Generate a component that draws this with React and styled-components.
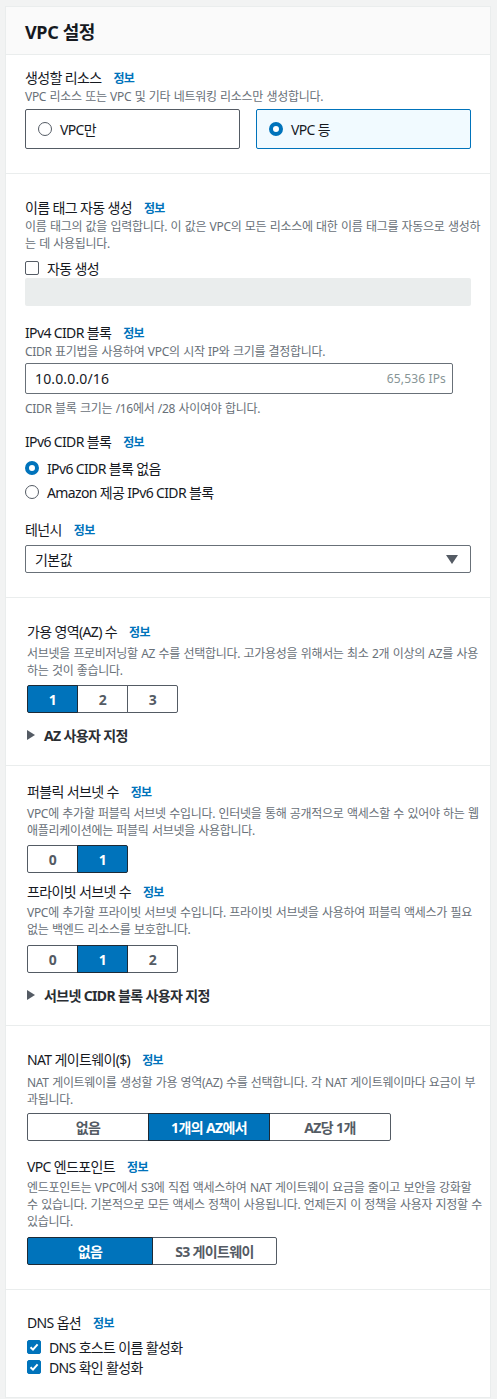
import React from "react"
import styled, { createGlobalStyle } from "styled-components"

const GlobalStyle = createGlobalStyle`
  body {
    margin: 0;
    background: #f2f3f3;
    font-family: "Noto Sans", "Noto Sans CJK KR", sans-serif;
    font-feature-settings: "palt";
    letter-spacing: -0.04em;
    color: #16191f;
  }
`

const Page = styled.div`
  padding: 6px 6px 1px 5px;
`

const Card = styled.div`
  background: #fff;
  border: 1px solid #eaeded;
`

const Header = styled.div`
  height: 47px;
  padding: 0 19px;
  display: flex;
  align-items: center;
  background: #fafafa;
  border-bottom: 1px solid #eaeded;
`

const Title = styled.h2`
  margin: 0;
  font-size: 18px;
  font-weight: 700;
  letter-spacing: -0.02em;
`

const Section = styled.div`
  padding: ${({ $top }) => $top}px 19px ${({ $bottom }) => $bottom}px
    ${({ $indent }) => $indent || 19}px;
  & + & {
    border-top: 1px solid #eaeded;
  }
`

const Label = styled.div`
  height: 20px;
  line-height: 20px;
  font-size: 14px;
  white-space: nowrap;
  margin-top: ${({ $mt }) => $mt || 0}px;
`

const Info = styled.span`
  margin-left: 12px;
  font-size: 12px;
  font-weight: 700;
  color: #0073bb;
`

const Desc = styled.div`
  font-size: 12px;
  color: #687078;
  letter-spacing: -0.025em;
  word-spacing: 0.05em;
  margin-top: ${({ $mt }) => $mt || 0}px;
`

const DescLine = styled.div`
  height: 17px;
  line-height: 17px;
  white-space: nowrap;
`

const Tiles = styled.div`
  display: grid;
  grid-template-columns: 1fr 1fr;
  gap: 16px;
  margin-top: 4px;
`

const Tile = styled.div`
  height: 40px;
  box-sizing: border-box;
  display: flex;
  align-items: center;
  gap: 8px;
  padding-left: 12px;
  font-size: 14px;
  border: 1px solid ${({ $on }) => ($on ? "#0073bb" : "#545b64")};
  background: ${({ $on }) => ($on ? "#f1faff" : "#fff")};
  border-radius: 2px;
`

const Radio = styled.span`
  width: 14px;
  height: 14px;
  box-sizing: border-box;
  border-radius: 50%;
  flex-shrink: 0;
  border: ${({ $on }) => ($on ? "4px solid #0073bb" : "1px solid #545b64")};
  background: #fff;
`

const OptionRow = styled.div`
  display: flex;
  align-items: center;
  gap: 8px;
  height: 20px;
  font-size: 14px;
  white-space: nowrap;
  margin-top: ${({ $mt }) => $mt || 0}px;
`

const Check = styled.span`
  width: 14px;
  height: 14px;
  box-sizing: border-box;
  border-radius: 2px;
  flex-shrink: 0;
  display: flex;
  align-items: center;
  justify-content: center;
  border: 1px solid ${({ $on }) => ($on ? "#0073bb" : "#545b64")};
  background: ${({ $on }) => ($on ? "#0073bb" : "#fff")};
`

const Disabled = styled.div`
  height: 28px;
  background: #eaeded;
  border-radius: 2px;
`

const Input = styled.div`
  height: 31px;
  box-sizing: border-box;
  width: ${({ $w }) => $w || "100%"};
  margin-top: ${({ $mt }) => $mt || 0}px;
  border: 1px solid #687078;
  border-radius: 2px;
  display: flex;
  align-items: center;
  justify-content: space-between;
  padding: 0 6px 0 9px;
  font-size: 14px;
  letter-spacing: 0.01em;
`

const Suffix = styled.span`
  font-size: 12px;
  color: #879596;
`

const Select = styled(Input)`
  height: 28px;
  padding-right: 12px;
  letter-spacing: -0.04em;
`

const Caret = styled.span`
  width: 0;
  height: 0;
  border-left: 6px solid transparent;
  border-right: 6px solid transparent;
  border-top: 9px solid #545b64;
`

const Segments = styled.div`
  display: flex;
  margin-top: ${({ $mt }) => $mt || 0}px;
`

const Segment = styled.div`
  width: ${({ $w }) => $w}px;
  height: 28px;
  box-sizing: border-box;
  display: flex;
  align-items: center;
  justify-content: center;
  font-size: 14px;
  font-weight: 700;
  color: ${({ $on }) => ($on ? "#fff" : "#545b64")};
  background: ${({ $on }) => ($on ? "#0073bb" : "#fff")};
  border: 1px solid ${({ $on }) => ($on ? "#1d2a36" : "#545b64")};
  position: relative;
  z-index: ${({ $on }) => ($on ? 1 : 0)};
  & + & {
    margin-left: -1px;
  }
  &:first-child {
    border-radius: 2px 0 0 2px;
  }
  &:last-child {
    border-radius: 0 2px 2px 0;
  }
`

const Expander = styled.div`
  display: flex;
  align-items: center;
  gap: 9px;
  height: 20px;
  margin-top: 12px;
  font-size: 14px;
  font-weight: 700;
  color: #2a2e33;
`

const Arrow = styled.span`
  width: 0;
  height: 0;
  border-top: 5px solid transparent;
  border-bottom: 5px solid transparent;
  border-left: 8px solid #545b64;
`

const Tick = () => (
  <svg width="10" height="10" viewBox="0 0 10 10">
    <path d="M1.5 5.2 L4 7.6 L8.6 2.4" fill="none" stroke="#fff" strokeWidth="2" />
  </svg>
)

const SegGroup = ({ items, active, w, mt }) => (
  <Segments $mt={mt}>
    {items.map((it, i) => (
      <Segment key={it} $w={Array.isArray(w) ? w[i] : w} $on={i === active}>
        {it}
      </Segment>
    ))}
  </Segments>
)

const FieldLabel = ({ children, mt }) => (
  <Label $mt={mt}>
    {children}
    <Info>정보</Info>
  </Label>
)

const Description = ({ lines, mt }) => (
  <Desc $mt={mt}>
    {lines.map((l) => (
      <DescLine key={l}>{l}</DescLine>
    ))}
  </Desc>
)

export default function App() {
  return (
    <Page>
      <GlobalStyle />
      <Card>
        <Header>
          <Title>VPC 설정</Title>
        </Header>

        <Section $top={13} $bottom={24}>
          <FieldLabel>생성할 리소스</FieldLabel>
          <Description lines={["VPC 리소스 또는 VPC 및 기타 네트워킹 리소스만 생성합니다."]} />
          <Tiles>
            <Tile>
              <Radio />
              VPC만
            </Tile>
            <Tile $on>
              <Radio $on />
              VPC 등
            </Tile>
          </Tiles>
        </Section>

        <Section $top={24} $bottom={24}>
          <FieldLabel>이름 태그 자동 생성</FieldLabel>
          <Description
            lines={[
              "이름 태그의 값을 입력합니다. 이 값은 VPC의 모든 리소스에 대한 이름 태그를 자동으로 생성하",
              "는 데 사용됩니다.",
            ]}
          />
          <OptionRow $mt={6}>
            <Check />
            자동 생성
          </OptionRow>
          <Disabled />

          <FieldLabel mt={17}>IPv4 CIDR 블록</FieldLabel>
          <Description lines={["CIDR 표기법을 사용하여 VPC의 시작 IP와 크기를 결정합니다."]} />
          <Input $mt={3} $w="428px">
            10.0.0.0/16
            <Suffix>65,536 IPs</Suffix>
          </Input>
          <Description mt={6} lines={["CIDR 블록 크기는 /16에서 /28 사이여야 합니다."]} />

          <FieldLabel mt={15}>IPv6 CIDR 블록</FieldLabel>
          <OptionRow $mt={6}>
            <Radio $on />
            IPv6 CIDR 블록 없음
          </OptionRow>
          <OptionRow $mt={4}>
            <Radio />
            Amazon 제공 IPv6 CIDR 블록
          </OptionRow>

          <FieldLabel mt={18}>테넌시</FieldLabel>
          <Select $mt={5}>
            기본값
            <Caret />
          </Select>
        </Section>

        <Section $top={24} $bottom={20} $indent={21}>
          <FieldLabel>가용 영역(AZ) 수</FieldLabel>
          <Description
            mt={3}
            lines={[
              "서브넷을 프로비저닝할 AZ 수를 선택합니다. 고가용성을 위해서는 최소 2개 이상의 AZ를 사용",
              "하는 것이 좋습니다.",
            ]}
          />
          <SegGroup items={["1", "2", "3"]} active={0} w={51} mt={6} />
          <Expander>
            <Arrow />
            AZ 사용자 지정
          </Expander>
        </Section>

        <Section $top={16} $bottom={20} $indent={21}>
          <FieldLabel>퍼블릭 서브넷 수</FieldLabel>
          <Description
            mt={3}
            lines={[
              "VPC에 추가할 퍼블릭 서브넷 수입니다. 인터넷을 통해 공개적으로 액세스할 수 있어야 하는 웹",
              "애플리케이션에는 퍼블릭 서브넷을 사용합니다.",
            ]}
          />
          <SegGroup items={["0", "1"]} active={1} w={51} mt={6} />

          <FieldLabel mt={9}>프라이빗 서브넷 수</FieldLabel>
          <Description
            mt={2}
            lines={[
              "VPC에 추가할 프라이빗 서브넷 수입니다. 프라이빗 서브넷을 사용하여 퍼블릭 액세스가 필요",
              "없는 백엔드 리소스를 보호합니다.",
            ]}
          />
          <SegGroup items={["0", "1", "2"]} active={1} w={51} mt={7} />
          <Expander>
            <Arrow />
            서브넷 CIDR 블록 사용자 지정
          </Expander>
        </Section>

        <Section $top={24} $bottom={24} $indent={21}>
          <FieldLabel>NAT 게이트웨이($)</FieldLabel>
          <Description
            mt={4}
            lines={[
              "NAT 게이트웨이를 생성할 가용 영역(AZ) 수를 선택합니다. 각 NAT 게이트웨이마다 요금이 부",
              "과됩니다.",
            ]}
          />
          <SegGroup items={["없음", "1개의 AZ에서", "AZ당 1개"]} active={1} w={122} mt={5} />

          <FieldLabel mt={16}>VPC 엔드포인트</FieldLabel>
          <Description
            mt={2}
            lines={[
              "엔드포인트는 VPC에서 S3에 직접 액세스하여 NAT 게이트웨이 요금을 줄이고 보안을 강화할",
              "수 있습니다. 기본적으로 모든 액세스 정책이 사용됩니다. 언제든지 이 정책을 사용자 지정할 수",
              "있습니다.",
            ]}
          />
          <SegGroup items={["없음", "S3 게이트웨이"]} active={0} w={[126, 125]} mt={7} />
        </Section>

        <Section $top={23} $bottom={20} $indent={21}>
          <FieldLabel>DNS 옵션</FieldLabel>
          <OptionRow $mt={4}>
            <Check $on>
              <Tick />
            </Check>
            DNS 호스트 이름 활성화
          </OptionRow>
          <OptionRow>
            <Check $on>
              <Tick />
            </Check>
            DNS 확인 활성화
          </OptionRow>
        </Section>
      </Card>
    </Page>
  )
}
